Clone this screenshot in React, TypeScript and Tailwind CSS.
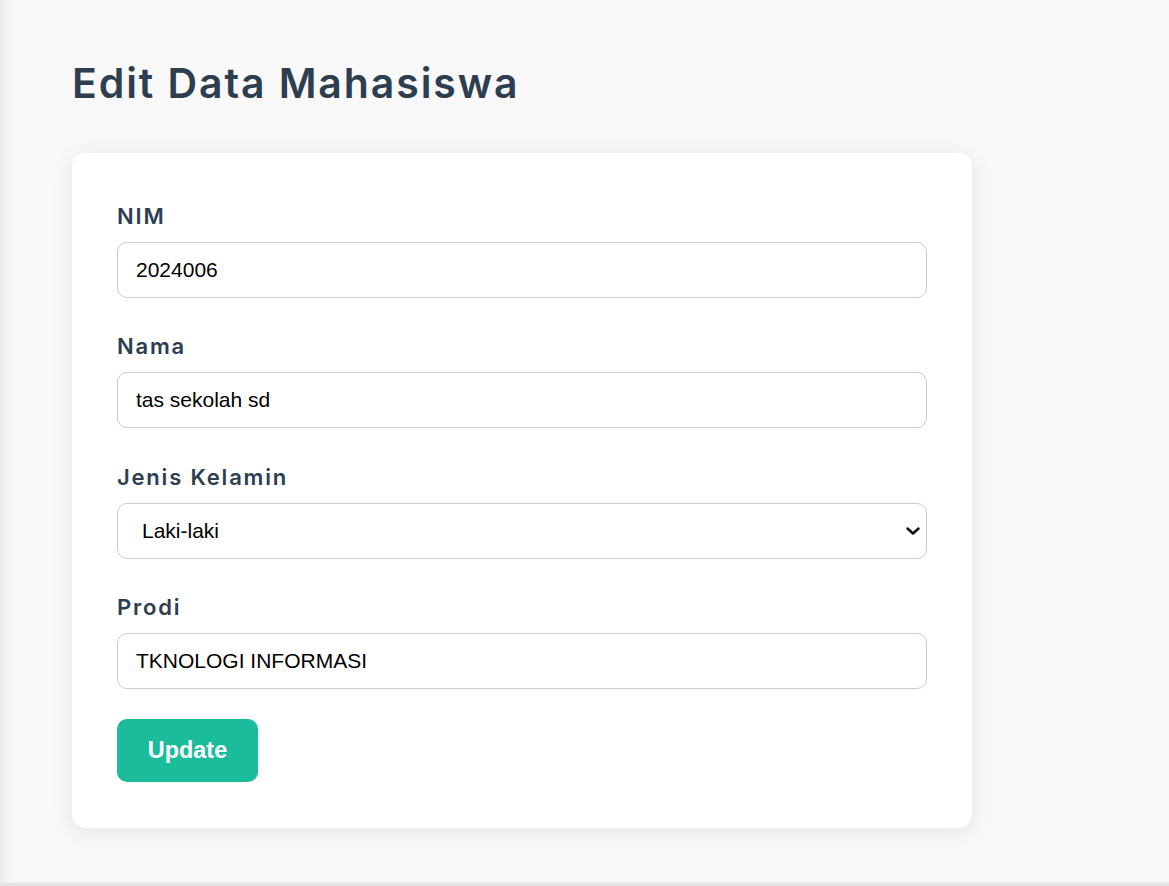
import React, { useState } from 'react';

const headingFont = { fontFamily: 'Inter, "Noto Sans", sans-serif' };

function Field({ label, children }: { label: string; children: React.ReactNode }) {
  return (
    <div className="mb-[32.3px]">
      <label
        className="block h-[30px] leading-[32px] mb-3 text-[22px] font-semibold text-[#2c3e50] tracking-[1.8px]"
        style={headingFont}
      >
        {label}
      </label>
      {children}
    </div>
  );
}

export default function App() {
  const [nim, setNim] = useState('2024006');
  const [nama, setNama] = useState('tas sekolah sd');
  const [jk, setJk] = useState('Laki-laki');
  const [prodi, setProdi] = useState('TKNOLOGI INFORMASI');

  const inputClass =
    'block w-full h-[56px] px-[18px] border border-[#cccccc] rounded-[10px] bg-white text-[21px] text-black outline-none';

  return (
    <div className="min-h-[886px] bg-[#e4e4e4]" style={{ fontFamily: '"Liberation Sans", Arial, sans-serif' }}>
      <div className="h-[883px] bg-[#f8f8f8] border-b border-[#ececec] shadow-[inset_14px_0_12px_-10px_rgba(0,0,0,0.07)] pl-[72px] pt-[55px]">
        <h1
          className="text-[41px] leading-[56px] font-semibold text-[#2c3e50] tracking-[1.9px] mb-[42px]"
          style={headingFont}
        >
          Edit Data Mahasiswa
        </h1>

        <div className="w-[900px] bg-white rounded-[14px] shadow-[0_4px_22px_rgba(0,0,0,0.08)] px-[45px] pt-[47px] pb-[46px]">
          <Field label="NIM">
            <input className={inputClass} value={nim} onChange={(e) => setNim(e.target.value)} />
          </Field>
          <Field label="Nama">
            <input className={inputClass} value={nama} onChange={(e) => setNama(e.target.value)} />
          </Field>
          <Field label="Jenis Kelamin">
            <div className="relative">
              <select
                className="block w-full h-[56px] pl-[24px] pr-10 appearance-none border border-[#cccccc] rounded-[10px] bg-white text-[21px] text-black outline-none"
                value={jk}
                onChange={(e) => setJk(e.target.value)}
              >
                <option>Laki-laki</option>
                <option>Perempuan</option>
              </select>
              <svg
                className="absolute right-[6px] top-1/2 -translate-y-1/2 pointer-events-none"
                width="16"
                height="10"
                viewBox="0 0 16 10"
              >
                <path d="M2.5 2.5 L8 7.5 L13.5 2.5" fill="none" stroke="#111" strokeWidth="2.5" strokeLinecap="round" strokeLinejoin="round" />
              </svg>
            </div>
          </Field>
          <Field label="Prodi">
            <input className={inputClass} value={prodi} onChange={(e) => setProdi(e.target.value)} />
          </Field>
          <button className="-mt-[2px] h-[63px] w-[141px] rounded-[10px] bg-[#1abc9c] text-white text-[23.4px] font-bold">
            Update
          </button>
        </div>
      </div>
    </div>
  );
}
